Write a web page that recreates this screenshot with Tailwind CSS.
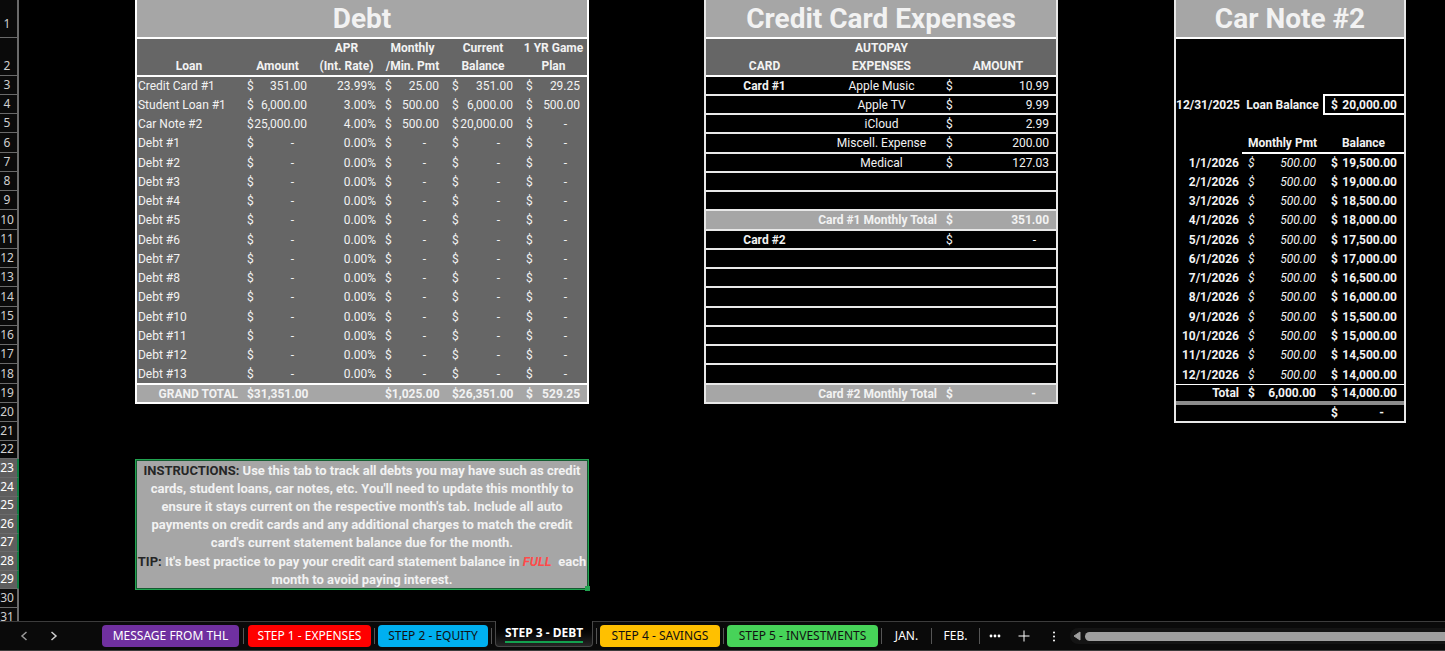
<!DOCTYPE html>
<html lang="en">

<head>
    <meta charset="UTF-8">
    <meta name="viewport" content="width=device-width, initial-scale=1.0">
    <title>Step 3 - Debt</title>
    <script src="https://cdn.jsdelivr.net/npm/@tailwindcss/browser@4"></script>
</head>

<body class="flex flex-col h-screen overflow-hidden bg-black text-[#f2f2f2] text-[12px] leading-4 font-['Roboto',sans-serif]">

    <div class="flex flex-1 min-h-0 overflow-hidden">

        <!-- row numbers -->
        <ol id="rowNumbers" class="w-[19px] shrink-0 bg-[#0a0a0a] text-[#d0d0d0] text-[12px] leading-[18px] font-['Noto_Sans',sans-serif]"></ol>

        <main class="flex-1 grid grid-cols-[116fr_454fr_115fr_354fr_116fr_232fr_39fr] items-start">

            <section class="col-start-2">
                <table class="table-fixed w-full border-separate border-spacing-0 border-x-2 border-white bg-[#666666]">
                    <colgroup>
                        <col class="w-[104px]">
                        <col class="w-[73px]">
                        <col class="w-[65px]">
                        <col class="w-[67px]">
                        <col class="w-[74px]">
                        <col class="w-[67px]">
                    </colgroup>
                    <thead>
                        <tr class="h-[39px] bg-[#a6a6a6]">
                            <th colspan="6" class="p-0 border-b-2 border-white text-[28px] leading-8 font-bold">Debt</th>
                        </tr>
                        <tr class="h-[38px] align-bottom leading-[18px]">
                            <th class="p-0 border-b-2 border-white">Loan</th>
                            <th class="p-0 border-b-2 border-white">Amount</th>
                            <th class="p-0 border-b-2 border-white whitespace-nowrap">APR<br>(Int. Rate)</th>
                            <th class="p-0 border-b-2 border-white whitespace-nowrap">Monthly<br>/Min. Pmt</th>
                            <th class="p-0 border-b-2 border-white">Current<br>Balance</th>
                            <th class="p-0 border-b-2 border-white whitespace-nowrap">1 YR Game<br>Plan</th>
                        </tr>
                    </thead>
                    <tbody id="debtRows"></tbody>
                </table>

                <div class="relative mt-[55px] h-[131px] border border-[#21a350] bg-[#a6a6a6] inset-ring inset-ring-[#145c31] text-center text-[13px] leading-[18px] font-bold whitespace-nowrap">
                    <p class="pt-0.5">
                        <span class="text-[#262626]">INSTRUCTIONS:</span> Use this tab to track all debts you may have such as credit<br>
                        cards, student loans, car notes, etc. You'll need to update this monthly to<br>
                        ensure it stays current on the respective month's tab. Include all auto<br>
                        payments on credit cards and any additional charges to match the credit<br>
                        card's current statement balance due for the month.
                    </p>
                    <p class="pt-px">
                        <span class="text-[#262626]">TIP:</span> It's best practice to pay your credit card statement balance in <em class="text-[#ff4b4b]">FULL</em>&nbsp; each<br>
                        month to avoid paying interest.
                    </p>
                    <span class="absolute -right-0.5 -bottom-0.5 size-[5px] bg-[#21a350]"></span>
                </div>
            </section>

            <section class="col-start-4">
                <table class="table-fixed w-full border-separate border-spacing-0 border-x-2 border-[#e8e8e8]">
                    <colgroup>
                        <col class="w-[117px]">
                        <col class="w-[117px]">
                        <col class="w-[116px]">
                    </colgroup>
                    <thead>
                        <tr class="h-[39px] bg-[#a6a6a6]">
                            <th colspan="3" class="p-0 border-b-2 border-white text-[28px] leading-8 font-bold whitespace-nowrap">Credit Card Expenses</th>
                        </tr>
                        <tr class="h-[38px] align-bottom leading-[18px] bg-[#666666]">
                            <th class="p-0 border-b-2 border-white">CARD</th>
                            <th class="p-0 border-b-2 border-white">AUTOPAY<br>EXPENSES</th>
                            <th class="p-0 border-b-2 border-white">AMOUNT</th>
                        </tr>
                    </thead>
                    <tbody id="cardRows"></tbody>
                </table>
            </section>

            <section class="col-start-6">
                <table class="table-fixed w-full border-separate border-spacing-0 border-x-2 border-b-2 border-[#e8e8e8] font-bold">
                    <colgroup>
                        <col class="w-[66px]">
                        <col class="w-[81px]">
                        <col class="w-[81px]">
                    </colgroup>
                    <thead>
                        <tr class="h-[39px] bg-[#a6a6a6]">
                            <th colspan="3" class="p-0 border-b-2 border-white text-[28px] leading-8 font-bold whitespace-nowrap">Car Note #2</th>
                        </tr>
                    </thead>
                    <tbody>
                        <tr class="h-[38px]">
                            <td colspan="3" class="p-0"></td>
                        </tr>
                    </tbody>
                    <tbody id="noteRows"></tbody>
                </table>
            </section>

        </main>
    </div>

    <!-- sheet tabs -->
    <nav class="flex items-center h-[30px] shrink-0 border-y border-[#3c3c3c] bg-[#0a0a0a] text-white text-[12px] font-['Noto_Sans',sans-serif] whitespace-nowrap">
        <button aria-label="Previous sheet" class="ml-[18px] size-3 text-[#9a9a9a]">
            <svg viewBox="0 0 12 12" class="size-3" fill="none" stroke="currentColor" stroke-width="1.5"><path d="M8.5 2 4 6l4.500 4"/></svg>
        </button>
        <button aria-label="Next sheet" class="ml-[18px] size-3 text-[#d0d0d0]">
            <svg viewBox="0 0 12 12" class="size-3" fill="none" stroke="currentColor" stroke-width="1.5"><path d="M3.500 2 8 6l-4.500 4"/></svg>
        </button>
        <div class="flex items-center gap-[3px] ml-[42px]">
            <button class="w-[137px] h-[22px] rounded bg-[#7030a0]">MESSAGE FROM THL</button>
            <span class="w-px h-4 mx-px bg-[#555]"></span>
            <button class="w-[123px] h-[22px] rounded bg-[#ff0000]">STEP 1 - EXPENSES</button>
            <span class="w-px h-4 bg-[#555]"></span>
            <button class="w-[110px] h-[22px] rounded bg-[#00b0f0] text-[#111]">STEP 2 - EQUITY</button>
            <span class="w-px h-4 bg-[#555]"></span>
            <button class="w-[98px] h-[26px] -mt-1 rounded-b border border-t-0 border-[#484848] bg-linear-to-b from-black to-[#262626] font-bold">
                <span class="inline-block border-b-2 border-[#13a04f]">STEP 3 - DEBT</span>
            </button>
            <span class="w-px h-4 bg-[#555]"></span>
            <button class="w-[120px] h-[22px] rounded bg-[#ffc000] text-[#111]">STEP 4 - SAVINGS</button>
            <span class="w-px h-4 bg-[#555]"></span>
            <button class="w-[151px] h-[22px] rounded bg-[#47d359] text-[#111]">STEP 5 - INVESTMENTS</button>
            <span class="w-px h-4 bg-[#555]"></span>
            <button class="w-[43px]">JAN.</button>
            <span class="w-px h-4 bg-[#555]"></span>
            <button class="w-[41px]">FEB.</button>
            <span class="w-px h-4 bg-[#555]"></span>
        </div>
        <button aria-label="All sheets" class="ml-[9px]">
            <svg viewBox="0 0 12 12" class="size-3" fill="currentColor"><circle cx="2" cy="6" r="1.400"/><circle cx="6" cy="6" r="1.400"/><circle cx="10" cy="6" r="1.400"/></svg>
        </button>
        <button aria-label="New sheet" class="ml-[17px]">
            <svg viewBox="0 0 12 12" class="size-3" stroke="currentColor"><path d="M6 .5v11M.5 6h11"/></svg>
        </button>
        <button aria-label="Resize tab bar" class="ml-[18px]">
            <svg viewBox="0 0 12 12" class="size-3" fill="currentColor"><circle cx="6" cy="2.500" r="1"/><circle cx="6" cy="6.500" r="1"/><circle cx="6" cy="10.500" r="1"/></svg>
        </button>
        <div class="flex flex-1 items-center gap-1 h-4 ml-2.5 pl-[3px] rounded-l-full bg-[#141414]">
            <button aria-label="Scroll left">
                <svg viewBox="0 0 8 10" class="w-2 h-2.5" fill="#a0a0a0"><path d="M7 1v8L1 5z" stroke="#a0a0a0" stroke-linejoin="round"/></svg>
            </button>
            <span class="flex-1 h-[9px] rounded-l-full bg-[#9f9f9f]"></span>
        </div>
    </nav>

</body>

<script>
    // dollar sign on the left, figure on the right, dash for zero
    function money(value) {
        if (value === '-') {
            return '<div class="flex justify-between pl-1.5 pr-5"><span>$</span><span>-</span></div>';
        }
        return '<div class="flex justify-between pl-1.5 pr-[7px]"><span>$</span><span>' + value + '</span></div>';
    }

    // every fourth row is one pixel taller
    const rowClass = 'h-[19px] nth-[4n]:h-[20px]';

    // row numbers
    const heights = [38, 38];
    for (let i = 3; i <= 19; i++) heights.push((i - 2) % 4 === 0 ? 20 : 19);
    heights.push(19, 19, 18, 19, 19, 18, 19, 18, 19, 18, 19, 19);
    document.getElementById('rowNumbers').innerHTML = heights.map((h, i) => {
        const selected = i + 1 >= 23 && i + 1 <= 29;
        const look = selected ? 'bg-[#5e5e5e] border-r-[#107c41] text-white' : 'border-r-[#6a6a6a]';
        return '<li class="flex items-end justify-center pr-[3px] first:pb-1 border-r-2 border-b border-b-[#6a6a6a] ' + look + '" style="height:' + h + 'px">' + (i + 1) + '</li>';
    }).join('');

    // debt table
    const debts = [
        ['Credit Card #1', '351.00', '23.99%', '25.00', '351.00', '29.25'],
        ['Student Loan #1', '6,000.00', '3.00%', '500.00', '6,000.00', '500.00'],
        ['Car Note #2', '25,000.00', '4.00%', '500.00', '20,000.00', '-'],
    ];
    for (let i = 1; i <= 13; i++) debts.push(['Debt #' + i, '-', '0.00%', '-', '-', '-']);

    document.getElementById('debtRows').innerHTML = debts.map((d, i) => {
        const line = i === debts.length - 1 ? ' border-b-2 border-white' : ' pb-0.5';
        return '<tr class="' + rowClass + '">' +
            '<td class="p-0 pl-px whitespace-nowrap' + line + '">' + d[0] + '</td>' +
            '<td class="p-0' + line + '">' + money(d[1]) + '</td>' +
            '<td class="p-0 pr-[3px] text-right' + line + '">' + d[2] + '</td>' +
            '<td class="p-0' + line + '">' + money(d[3]) + '</td>' +
            '<td class="p-0' + line + '">' + money(d[4]) + '</td>' +
            '<td class="p-0' + line + '">' + money(d[5]) + '</td></tr>';
    }).join('') +
        '<tr class="h-[19px] bg-[#a6a6a6] font-bold">' +
        ['<div class="pr-[3px] text-right">GRAND TOTAL</div>', money('31,351.00'), '', money('1,025.00'), money('26,351.00'), money('529.25')].map((c) =>
            '<td class="p-0 border-b-2 border-white">' + c + '</td>').join('') + '</tr>';

    // credit card table
    const cards = [
        ['Card #1', 'Apple Music', '10.99'],
        ['', 'Apple TV', '9.99'],
        ['', 'iCloud', '2.99'],
        ['', 'Miscell. Expense', '200.00'],
        ['', 'Medical', '127.03'],
        ['', '', ''],
        ['', '', ''],
        ['total', 'Card #1 Monthly Total', '351.00'],
        ['Card #2', '', '-'],
        ['', '', ''],
        ['', '', ''],
        ['', '', ''],
        ['', '', ''],
        ['', '', ''],
        ['', '', ''],
        ['', '', ''],
        ['total', 'Card #2 Monthly Total', '-'],
    ];
    document.getElementById('cardRows').innerHTML = cards.map((c) => {
        const amount = c[2] ? money(c[2]) : '';
        if (c[0] === 'total') {
            return '<tr class="' + rowClass + ' bg-[#a6a6a6] font-bold">' +
                '<td colspan="2" class="p-0 pr-[3px] border-b-2 border-[#e8e8e8] text-right">' + c[1] + '</td>' +
                '<td class="p-0 border-b-2 border-[#e8e8e8]">' + amount + '</td></tr>';
        }
        return '<tr class="' + rowClass + '">' +
            '<td class="p-0 border-b-2 border-[#e8e8e8] text-center font-bold">' + c[0] + '</td>' +
            '<td class="p-0 border-b-2 border-[#e8e8e8] text-center whitespace-nowrap">' + c[1] + '</td>' +
            '<td class="p-0 border-b-2 border-[#e8e8e8]">' + amount + '</td></tr>';
    }).join('');

    // car note schedule
    let note = '<tr class="' + rowClass + '"><td colspan="2" class="p-0"></td><td class="p-0 border-b-2 border-white"></td></tr>' +
        '<tr class="' + rowClass + '"><td class="p-0 pb-0.5 pr-[3px] text-right">12/31/2025</td>' +
        '<td class="p-0 pb-0.5 text-center whitespace-nowrap">Loan Balance</td>' +
        '<td class="p-0 border-l-2 border-b-2 border-white">' + money('20,000.00') + '</td></tr>' +
        '<tr class="' + rowClass + '"><td colspan="3" class="p-0"></td></tr>' +
        '<tr class="' + rowClass + '"><td class="p-0"></td><td class="p-0 border-b-2 border-white text-center">Monthly Pmt</td>' +
        '<td class="p-0 border-b-2 border-white text-center">Balance</td></tr>';
    for (let m = 1; m <= 12; m++) {
        const balance = (20000 - m * 500).toLocaleString('en-US') + '.00';
        const line = m === 12 ? ' border-b border-white' : ' pb-0.5';
        note += '<tr class="' + rowClass + '"><td class="p-0 pr-[3px] text-right' + line + '">' + m + '/1/2026</td>' +
            '<td class="p-0 font-normal italic' + line + '">' + money('500.00') + '</td>' +
            '<td class="p-0 pl-0.5' + line + '">' + money(balance) + '</td></tr>';
    }
    note += '<tr class="h-[20px]"><td class="p-0 pr-[3px] border-b-4 border-[#8c8c8c] text-right">Total</td>' +
        '<td class="p-0 border-b-4 border-[#8c8c8c]">' + money('6,000.00') + '</td>' +
        '<td class="p-0 pl-0.5 border-b-4 border-[#8c8c8c]">' + money('14,000.00') + '</td></tr>' +
        '<tr class="h-[16px]"><td colspan="2" class="p-0"></td><td class="p-0 pl-0.5">' + money('-') + '</td></tr>';
    document.getElementById('noteRows').innerHTML = note;
</script>

</html>
